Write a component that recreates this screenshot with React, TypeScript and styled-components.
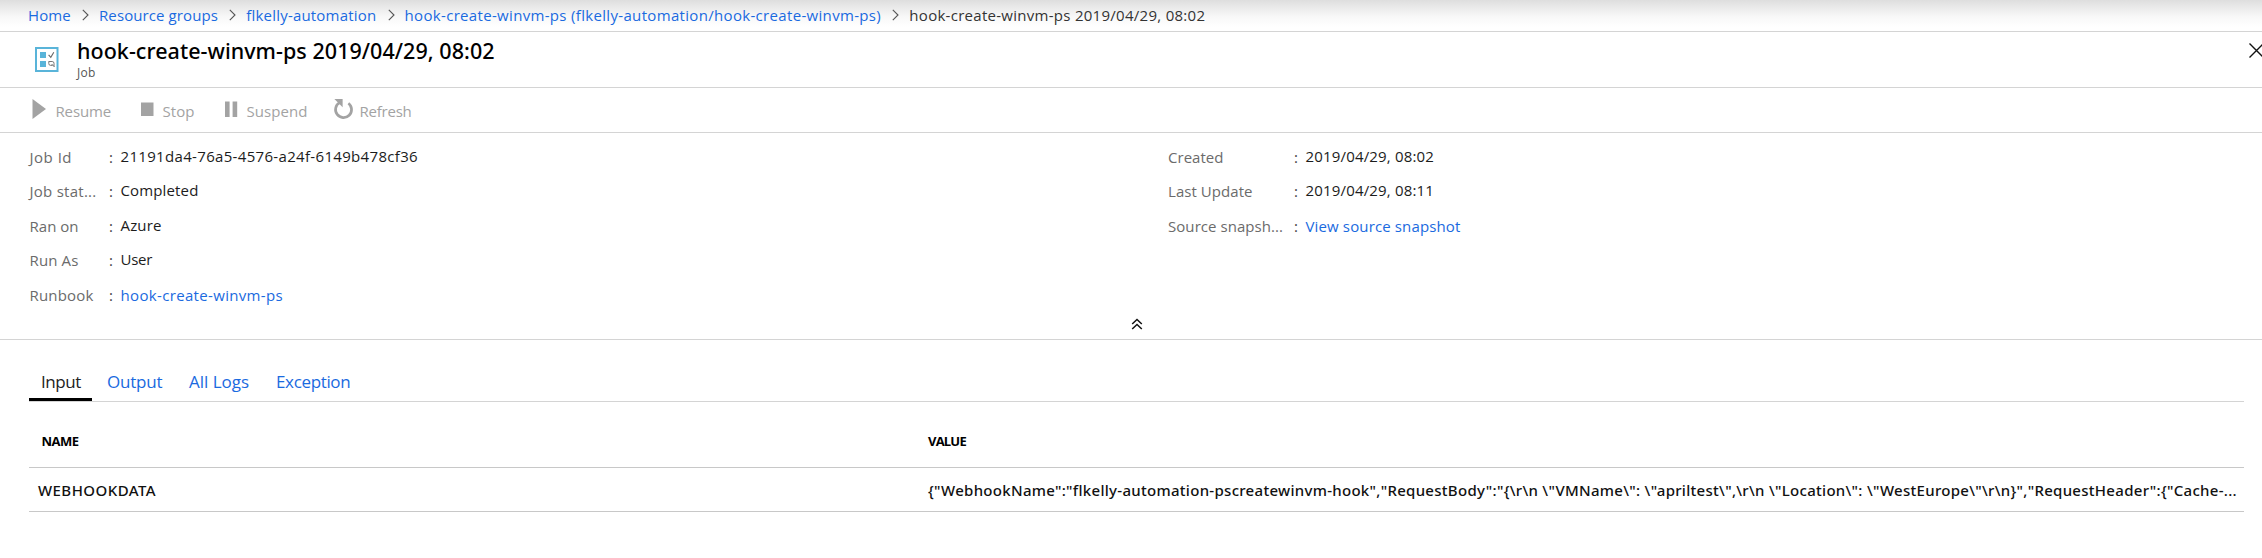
import React from 'react';
import styled, { createGlobalStyle } from 'styled-components';

const GlobalStyle = createGlobalStyle`
  * { box-sizing: border-box; }
  body {
    margin: 0;
    background: #fff;
    color: #1c1c1c;
    font-family: 'Open Sans', 'Noto Sans', sans-serif;
    font-size: 15px;
    overflow: hidden;
  }
`;

const line = '#d4d4d4';
const linkBlue = '#1a6ae0';

type Track = { $track?: number };

const Page = styled.main`
  display: flex;
  flex-direction: column;
  width: 100%;
  height: 558px;
  overflow: hidden;
`;

const Breadcrumb = styled.nav`
  display: flex;
  align-items: center;
  height: 32px;
  padding-left: 28px;
  border-bottom: 1px solid ${line};
  background: linear-gradient(#dedede 0, #e6e6e6 5px, #f8f8f8 17px, #fff 27px);
  white-space: nowrap;
`;

const Crumb = styled.a<Track & { $current?: boolean }>`
  color: ${(p) => (p.$current ? '#333' : linkBlue)};
  letter-spacing: ${(p) => p.$track ?? 0}px;
  line-height: 31px;
`;

const Separator = styled.svg`
  width: 7px;
  height: 12px;
  margin: 0 10px 1px 11.3px;
  fill: none;
  stroke: #555;
  stroke-width: 1.1;
`;

const Header = styled.header`
  display: flex;
  align-items: flex-start;
  height: 56px;
  padding-left: 34px;
  border-bottom: 1px solid ${line};
`;

const JobIcon = styled.svg`
  width: 26px;
  height: 28px;
  margin-top: 14px;
  flex: none;
`;

const Titles = styled.div`
  display: flex;
  flex-direction: column;
  flex: 1;
  margin-left: 17px;
  padding-top: 3px;
`;

const Title = styled.h1`
  margin: 0;
  font-family: 'Noto Sans', sans-serif;
  font-size: 21.5px;
  font-weight: 500;
  line-height: 32px;
  letter-spacing: 0.04px;
  color: #000;
`;

const Subtitle = styled.span`
  font-size: 12px;
  line-height: 12px;
  letter-spacing: 0.3px;
  color: #555;
`;

const Close = styled.svg`
  width: 14px;
  height: 15px;
  margin: 11px -1px 0 0;
  flex: none;
  fill: none;
  stroke: #111;
  stroke-width: 1.4;
`;

const Toolbar = styled.div`
  display: flex;
  align-items: flex-start;
  height: 45px;
  padding-left: 32px;
  border-bottom: 1px solid ${line};
`;

const Command = styled.button<{ $width: number; $icon: number }>`
  display: grid;
  grid-template-columns: ${(p) => p.$icon}px 1fr;
  width: ${(p) => p.$width}px;
  height: 44px;
  padding: 0;
  border: 0;
  background: none;
  font: inherit;
  color: #a3a3a3;
  text-align: left;
`;

const CommandIcon = styled.svg`
  width: 21px;
  height: 24px;
  margin-top: 9px;
`;

const CommandLabel = styled.span<Track>`
  line-height: 46px;
  letter-spacing: ${(p) => p.$track ?? 0}px;
`;

const Essentials = styled.section`
  height: 207px;
  padding-top: 6.6px;
  border-bottom: 1px solid ${line};
`;

const Columns = styled.div`
  display: grid;
  grid-template-columns: 1138.5px 1fr;
  padding-left: 29.5px;
  height: 173.4px;
`;

const Properties = styled.dl<{ $label: number }>`
  display: grid;
  grid-template-columns: ${(p) => p.$label}px 11.5px 1fr;
  grid-auto-rows: 34.5px;
  align-content: start;
  margin: 0;
  line-height: 34.5px;
  white-space: nowrap;
`;

const Label = styled.dt<Track>`
  color: #6b6b6b;
  letter-spacing: ${(p) => p.$track ?? 0}px;
`;

const Colon = styled.span`
  color: #444;
`;

const Value = styled.dd<Track & { $link?: boolean }>`
  margin: 0;
  color: ${(p) => (p.$link ? linkBlue : '#1c1c1c')};
  line-height: ${(p) => (p.$link ? 34.5 : 32.5)}px;
  letter-spacing: ${(p) => p.$track ?? 0}px;
`;

const CollapseRow = styled.div`
  display: flex;
  justify-content: center;
  padding-right: 1px;
  padding-left: 13px;
`;

const CollapseIcon = styled.svg`
  width: 12px;
  height: 12px;
  margin-top: 5px;
  fill: none;
  stroke: #111;
  stroke-width: 1.5;
`;

const Details = styled.section`
  margin: 0 18px 0 29px;
`;

const Tabs = styled.div`
  display: flex;
  height: 62px;
  padding-top: 22px;
  border-bottom: 1px solid ${line};
`;

const Tab = styled.button<Track & { $active?: boolean; $width: number; $inset: number }>`
  width: ${(p) => p.$width}px;
  height: 39px;
  padding: 2px 0 0 ${(p) => p.$inset}px;
  border: 0;
  border-bottom: 3px solid ${(p) => (p.$active ? '#000' : 'transparent')};
  background: none;
  color: ${(p) => (p.$active ? '#222' : linkBlue)};
  font-family: inherit;
  font-size: 17px;
  line-height: 36px;
  text-align: left;
  white-space: nowrap;
  letter-spacing: ${(p) => p.$track ?? 0}px;
`;

const Row = styled.div<{ $head?: boolean }>`
  display: grid;
  grid-template-columns: 899px 1fr;
  align-items: center;
  height: ${(p) => (p.$head ? 66 : 44)}px;
  padding-top: ${(p) => (p.$head ? 13 : 1)}px;
  border-bottom: 1px solid #c8c8c8;
`;

const HeadCell = styled.span<Track & { $first?: boolean }>`
  padding-left: ${(p) => (p.$first ? 12.5 : 0)}px;
  font-size: 13px;
  font-weight: 700;
  color: #000;
  letter-spacing: ${(p) => p.$track ?? 0}px;
`;

const Cell = styled.span<Track & { $first?: boolean }>`
  padding-left: ${(p) => (p.$first ? 9 : 0)}px;
  font-family: 'Noto Sans', sans-serif;
  font-weight: 500;
  color: #111;
  white-space: nowrap;
  letter-spacing: ${(p) => p.$track ?? 0}px;
`;

const crumbs = [
  { text: 'Home', track: 0.08 },
  { text: 'Resource groups', track: 0.1 },
  { text: 'flkelly-automation', track: 0.19 },
  { text: 'hook-create-winvm-ps (flkelly-automation/hook-create-winvm-ps)', track: 0.325 },
  { text: 'hook-create-winvm-ps 2019/04/29, 08:02', track: 0.28 },
];

const commands = [
  { text: 'Resume', width: 108, icon: 23.5, track: -0.14, glyph: <path d="M0.5 2v20L14 12z" fill="#a3a3a3" /> },
  { text: 'Stop', width: 84, icon: 22.5, track: 0.06, glyph: <path d="M1 5.5h12.5V19H1z" fill="#a3a3a3" /> },
  { text: 'Suspend', width: 109, icon: 22.5, track: 0.06, glyph: <path d="M1 4.5h4.6v15.5H1zM8.6 4.5h4.6v15.5H8.6z" fill="#a3a3a3" /> },
  {
    text: 'Refresh',
    width: 90,
    icon: 26.5,
    track: -0.23,
    glyph: (
      <>
        <path d="M15.4 6.2a8 8 0 1 1-8.8-.6" fill="none" stroke="#a3a3a3" strokeWidth="2.7" />
        <path d="M1.4 2h8.2v8.2z" fill="#a3a3a3" />
      </>
    ),
  },
];

type Property = { label: string; labelTrack: number; value: string; track: number; link?: boolean };

const leftProperties: Property[] = [
  { label: 'Job Id', labelTrack: 0.5, value: '21191da4-76a5-4576-a24f-6149b478cf36', track: 0.325 },
  { label: 'Job stat...', labelTrack: 0.26, value: 'Completed', track: 0.145 },
  { label: 'Ran on', labelTrack: 0.02, value: 'Azure', track: 0.146 },
  { label: 'Run As', labelTrack: 0.13, value: 'User', track: -0.28 },
  { label: 'Runbook', labelTrack: 0.18, value: 'hook-create-winvm-ps', track: 0.337, link: true },
];

const rightProperties: Property[] = [
  { label: 'Created', labelTrack: 0.03, value: '2019/04/29, 08:02', track: 0.168 },
  { label: 'Last Update', labelTrack: 0.05, value: '2019/04/29, 08:11', track: 0.168 },
  { label: 'Source snapsh...', labelTrack: 0.06, value: 'View source snapshot', track: 0.137, link: true },
];

const tabs = [
  { text: 'Input', width: 63, inset: 12, track: -0.42 },
  { text: 'Output', width: 85, inset: 15, track: -0.2 },
  { text: 'All Logs', width: 87, inset: 12, track: 0 },
  { text: 'Exception', width: 90, inset: 12, track: -0.35 },
];

const webhookData =
  '{"WebhookName":"flkelly-automation-pscreatewinvm-hook","RequestBody":"{\\r\\n \\"VMName\\": \\"apriltest\\",\\r\\n \\"Location\\": \\"WestEurope\\"\\r\\n}","RequestHeader":{"Cache-...';

function PropertyList({ items, labelWidth }: { items: Property[]; labelWidth: number }) {
  return (
    <Properties $label={labelWidth}>
      {items.map((p) => (
        <React.Fragment key={p.label}>
          <Label $track={p.labelTrack}>{p.label}</Label>
          <Colon>:</Colon>
          <Value $track={p.track} $link={p.link}>{p.value}</Value>
        </React.Fragment>
      ))}
    </Properties>
  );
}

export default function App() {
  return (
    <Page>
      <GlobalStyle />
      <Breadcrumb>
        {crumbs.map((c, i) => (
          <React.Fragment key={c.text}>
            {i > 0 && (
              <Separator viewBox="0 0 7 12">
                <path d="M0.8 0.8L6 6L0.8 11.2" />
              </Separator>
            )}
            <Crumb $track={c.track} $current={i === crumbs.length - 1}>{c.text}</Crumb>
          </React.Fragment>
        ))}
      </Breadcrumb>

      <Header>
        <JobIcon viewBox="0 0 26 28">
          <rect x="2" y="2" width="21.5" height="23" fill="#fff" stroke="#59b4d9" strokeWidth="2" />
          <path d="M6 6h6v6H6zM6 15h6v6H6z" fill="#59b4d9" />
          <path d="M14.6 8.8l2.2 2.5 3-5" fill="none" stroke="#666" strokeWidth="1.1" />
          <path d="M15 15.5h3.2a1.8 1.8 0 0 1 1.8 1.8v3.2M14.8 15.2v2.4a1.8 1.8 0 0 0 1.8 1.8h2M17.6 18l3 3" fill="none" stroke="#777" />
        </JobIcon>
        <Titles>
          <Title>hook-create-winvm-ps 2019/04/29, 08:02</Title>
          <Subtitle>Job</Subtitle>
        </Titles>
        <Close viewBox="0 0 14 15">
          <path d="M0.5 0.5l14 14M14.5 0.5l-14 14" />
        </Close>
      </Header>

      <Toolbar>
        {commands.map((c) => (
          <Command key={c.text} $width={c.width} $icon={c.icon}>
            <CommandIcon viewBox="0 0 21 24">{c.glyph}</CommandIcon>
            <CommandLabel $track={c.track}>{c.text}</CommandLabel>
          </Command>
        ))}
      </Toolbar>

      <Essentials>
        <Columns>
          <PropertyList items={leftProperties} labelWidth={79.5} />
          <PropertyList items={rightProperties} labelWidth={126} />
        </Columns>
        <CollapseRow>
          <CollapseIcon viewBox="0 0 12 12">
            <path d="M1.2 6L6 1.5L10.8 6M1.2 11L6 6.5L10.8 11" />
          </CollapseIcon>
        </CollapseRow>
      </Essentials>

      <Details>
        <Tabs>
          {tabs.map((t, i) => (
            <Tab key={t.text} $width={t.width} $inset={t.inset} $track={t.track} $active={i === 0}>{t.text}</Tab>
          ))}
        </Tabs>
        <Row $head>
          <HeadCell $first $track={-0.5}>NAME</HeadCell>
          <HeadCell $track={-0.8}>VALUE</HeadCell>
        </Row>
        <Row>
          <Cell $first $track={0.45}>WEBHOOKDATA</Cell>
          <Cell $track={0.291}>{webhookData}</Cell>
        </Row>
      </Details>
    </Page>
  );
}
